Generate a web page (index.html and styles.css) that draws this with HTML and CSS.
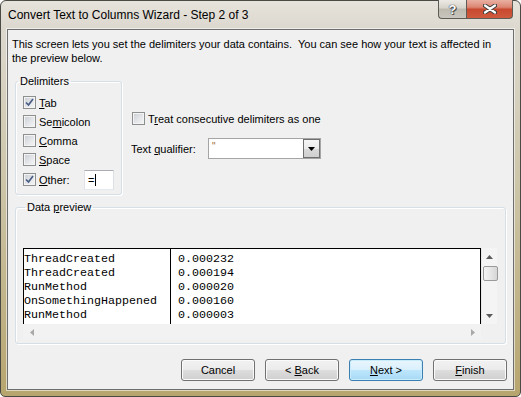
FILE: index.html
```html
<!DOCTYPE html>
<html lang="en">
<head>
  <meta charset="UTF-8" />
  <title>Convert Text to Columns Wizard - Step 2 of 3</title>
  <link rel="stylesheet" href="styles.css">
</head>
<body>
  <div class="window">
    <div class="titlebar">
      <span class="title">Convert Text to Columns Wizard - Step 2 of 3</span>
      <div class="caption">
        <span class="cap help">?</span>
        <span class="cap close">
          <svg width="14" height="10" viewBox="0 0 14 10">
            <path d="M2 1.5 L12 8.5 M12 1.5 L2 8.5" stroke="#3b3b3b" stroke-width="4.2" stroke-linecap="round"/>
            <path d="M2 1.5 L12 8.5 M12 1.5 L2 8.5" stroke="#fff" stroke-width="2.2" stroke-linecap="round"/>
          </svg>
        </span>
      </div>
    </div>

    <div class="client">
      <p class="intro">This screen lets you set the delimiters your data contains.&nbsp; You can see how your text is affected in the preview below.</p>

      <div class="options">
        <fieldset class="group delimiters">
          <legend>Delimiters</legend>
          <label class="check"><span class="box"><svg width="9" height="9" viewBox="0 0 9 9"><path d="M1 4.5 L3.5 7 L8 1" fill="none" stroke="#4a5d86" stroke-width="1.7"/></svg></span><span><u>T</u>ab</span></label>
          <label class="check"><span class="box"></span><span>Se<u>m</u>icolon</span></label>
          <label class="check"><span class="box"></span><span><u>C</u>omma</span></label>
          <label class="check"><span class="box"></span><span><u>S</u>pace</span></label>
          <div class="other-row">
            <label class="check"><span class="box"><svg width="9" height="9" viewBox="0 0 9 9"><path d="M1 4.5 L3.5 7 L8 1" fill="none" stroke="#4a5d86" stroke-width="1.7"/></svg></span><span><u>O</u>ther:</span></label>
            <span class="textbox">=<span class="caret"></span></span>
          </div>
        </fieldset>

        <div class="side">
          <label class="check"><span class="box"></span><span>T<u>r</u>eat consecutive delimiters as one</span></label>
          <div class="qualifier">
            <span class="qlabel">Text <u>q</u>ualifier:</span>
            <div class="combo">
              <span class="value">"</span>
              <span class="drop"><svg width="7" height="4" viewBox="0 0 7 4"><path d="M0 0H7L3.5 4Z" fill="#000"/></svg></span>
            </div>
          </div>
        </div>
      </div>

      <fieldset class="group preview">
        <legend>Data <u>p</u>review</legend>
        <div class="preview-body">
          <div class="sheet">
            <div class="col name">
              <div>ThreadCreated</div>
              <div>ThreadCreated</div>
              <div>RunMethod</div>
              <div>OnSomethingHappened</div>
              <div>RunMethod</div>
            </div>
            <div class="col value">
              <div>0.000232</div>
              <div>0.000194</div>
              <div>0.000020</div>
              <div>0.000160</div>
              <div>0.000003</div>
            </div>
          </div>
          <div class="vscroll">
            <span class="arrow"><svg width="7" height="4" viewBox="0 0 7 4"><path d="M0 4L3.5 0L7 4Z" fill="#5a5a5a"/></svg></span>
            <span class="thumb"></span>
            <span class="track"></span>
            <span class="arrow"><svg width="7" height="4" viewBox="0 0 7 4"><path d="M0 0H7L3.5 4Z" fill="#5a5a5a"/></svg></span>
          </div>
          <div class="hscroll">
            <span class="arrow"><svg width="4" height="7" viewBox="0 0 4 7"><path d="M4 0V7L0 3.5Z" fill="#a9a9a9"/></svg></span>
            <span class="arrow"><svg width="4" height="7" viewBox="0 0 4 7"><path d="M0 0V7L4 3.5Z" fill="#a9a9a9"/></svg></span>
          </div>
          <div class="corner"></div>
        </div>
      </fieldset>

      <div class="buttons">
        <button class="btn">Cancel</button>
        <button class="btn">&lt; <u>B</u>ack</button>
        <button class="btn default"><u>N</u>ext &gt;</button>
        <button class="btn"><u>F</u>inish</button>
      </div>
    </div>
  </div>
</body>
</html>
```

FILE: styles.css
```css
* {
  box-sizing: border-box;
}

body {
  margin: 0;
  width: 521px;
  height: 397px;
  overflow: hidden;
  background: #fff;
  font-family: "Liberation Sans", Arial, sans-serif;
  font-size: 11px;
  color: #000;
}

u {
  text-underline-offset: 1px;
}

/* window frame */

.window {
  width: 521px;
  height: 397px;
  display: flex;
  flex-direction: column;
  padding: 0 6px 6px;
  border: 1px solid #4b4a45;
  border-radius: 6px 6px 5px 5px;
  background: linear-gradient(180deg, #e6e3dc 0, #dcd8ce 28px, #cdc6aa 45%, #b7a56e 100%);
}

.titlebar {
  height: 28px;
  display: flex;
  justify-content: space-between;
  align-items: flex-start;
}

.title {
  padding: 6px 0 0 1px;
  line-height: 16px;
  font-size: 12px;
}

.caption {
  display: flex;
  margin: -1px 1px 0 0;
}

.cap {
  height: 19px;
  display: flex;
  align-items: center;
  justify-content: center;
  border: 1px solid #5d5c57;
  border-top: none;
}

.help {
  width: 28px;
  border-right: none;
  border-radius: 0 0 0 4px;
  background: linear-gradient(180deg, #eceae4 0%, #d6d3ca 45%, #bdb9ae 50%, #c9c6be 100%);
  color: #fff;
  font-weight: bold;
  font-size: 13px;
  text-shadow: 0 0 1px #333, 0 0 1px #333, 1px 1px 0 #555;
}

.close {
  width: 47px;
  border-radius: 0 0 4px 0;
  background: linear-gradient(180deg, #eab0a2 0%, #dc8672 40%, #c8492f 52%, #cf5a3e 100%);
}

.client {
  flex: 1;
  display: flex;
  flex-direction: column;
  background: #f0f0f0;
  border: 1px solid #6e6e6e;
  box-shadow: 0 0 0 1px rgba(255, 255, 255, 0.55);
}

.intro {
  margin: 0;
  padding: 7px 4px 0;
  line-height: 14px;
}

/* group boxes */

.group {
  margin: 0;
  padding: 0;
  min-width: 0;
  border: 1px solid #d5dfe5;
  border-radius: 3px;
  box-shadow: inset 1px 1px 0 #fff, 1px 1px 0 #fff;
}

.group legend {
  padding: 0 2px;
  margin-left: 2px;
  line-height: 14px;
}

.options {
  display: flex;
  align-items: flex-start;
  margin: 9px 0 0 7px;
}

.delimiters {
  width: 107px;
  padding: 5px 0 4px;
}

.check {
  display: flex;
  align-items: center;
  gap: 3px;
  height: 19px;
  white-space: nowrap;
}

.delimiters .check {
  margin-left: 7px;
}

.box {
  width: 13px;
  height: 13px;
  flex: none;
  display: flex;
  align-items: center;
  justify-content: center;
  border: 1px solid #8e8f8f;
  background: linear-gradient(135deg, #c9cdd3 0%, #e4e6e9 55%, #f6f6f6 100%);
  box-shadow: inset 0 0 0 1px #f4f4f4;
}

.other-row {
  display: flex;
  align-items: center;
  height: 21px;
  margin-left: 7px;
}

.delimiters .other-row .check {
  width: 61px;
  margin-left: 0;
}

.textbox {
  width: 30px;
  height: 20px;
  display: flex;
  align-items: center;
  padding-left: 3px;
  background: #fff;
  border: 1px solid;
  border-color: #abadb3 #dbdfe6 #e3e9ef #e2e3ea;
}

.caret {
  width: 1px;
  height: 12px;
  margin-left: 1px;
  background: #000;
}

.side {
  display: flex;
  flex-direction: column;
  gap: 10px;
  margin: 35px 0 0 10px;
}

.qualifier {
  display: flex;
  align-items: center;
  margin-left: -1px;
}

.qlabel {
  width: 77px;
}

.combo {
  width: 113px;
  height: 21px;
  display: flex;
  background: #fff;
  border: 1px solid #a5a5a5;
}

.combo .value {
  flex: 1;
  padding: 1px 0 0 3px;
  color: #a26a2c;
  font-size: 10px;
  line-height: 14px;
}

.drop {
  width: 17px;
  display: flex;
  align-items: center;
  justify-content: center;
  border: 1px solid #6f6f6f;
  background: linear-gradient(180deg, #f5f5f5 0%, #ebebeb 50%, #dadada 51%, #d0d0d0 100%);
}

/* data preview */

.preview {
  margin: 5px 7px 0;
  padding: 34px 0 3px 7px;
}

.preview-body {
  display: grid;
  grid-template-columns: 458px 16px;
  grid-template-rows: 76px 16px;
}

.sheet {
  display: flex;
  overflow: hidden;
  background: #fff;
  border: 1px solid #000;
  border-bottom: none;
  font-family: "Liberation Mono", "Courier New", monospace;
  font-size: 11.67px;
  line-height: 14px;
}

.col {
  padding-top: 3px;
  white-space: nowrap;
}

.col.name {
  width: 147px;
  border-right: 1px solid #000;
}

.col.value {
  padding-left: 7px;
}

.vscroll {
  display: flex;
  flex-direction: column;
  align-items: center;
  background: #f4f4f4;
  border-left: 1px solid #e9e9e9;
}

.vscroll .arrow {
  height: 17px;
  display: flex;
  align-items: center;
  justify-content: center;
}

.thumb {
  width: 15px;
  height: 15px;
  margin: 1px 0 0 1px;
  border: 1px solid #9a9a9a;
  border-radius: 2px;
  background: linear-gradient(90deg, #f3f3f3 0%, #e6e6e6 50%, #d6d6d6 100%);
}

.track {
  flex: 1;
}

.hscroll {
  display: flex;
  justify-content: space-between;
  background: #f2f2f2;
}

.hscroll .arrow {
  width: 17px;
  display: flex;
  align-items: center;
  justify-content: center;
}

.corner {
  background: #f0f0f0;
}

/* buttons */

.buttons {
  display: flex;
  justify-content: flex-end;
  gap: 10px;
  margin: 15px 6px 0 0;
}

.btn {
  width: 74px;
  height: 22px;
  padding: 0;
  font-family: inherit;
  font-size: 11px;
  color: #000;
  border: 1px solid #707070;
  border-radius: 3px;
  background: linear-gradient(180deg, #f2f2f2 0%, #ebebeb 48%, #dddddd 52%, #cfcfcf 100%);
  box-shadow: inset 0 0 0 1px #fbfbfb;
}

.btn.default {
  border-color: #3c7fb1;
  background: linear-gradient(180deg, #eaf6fd 0%, #d9f0fc 48%, #bee6fd 52%, #a7d9f5 100%);
  box-shadow: inset 0 0 0 1px #c8ecfc;
}
```
